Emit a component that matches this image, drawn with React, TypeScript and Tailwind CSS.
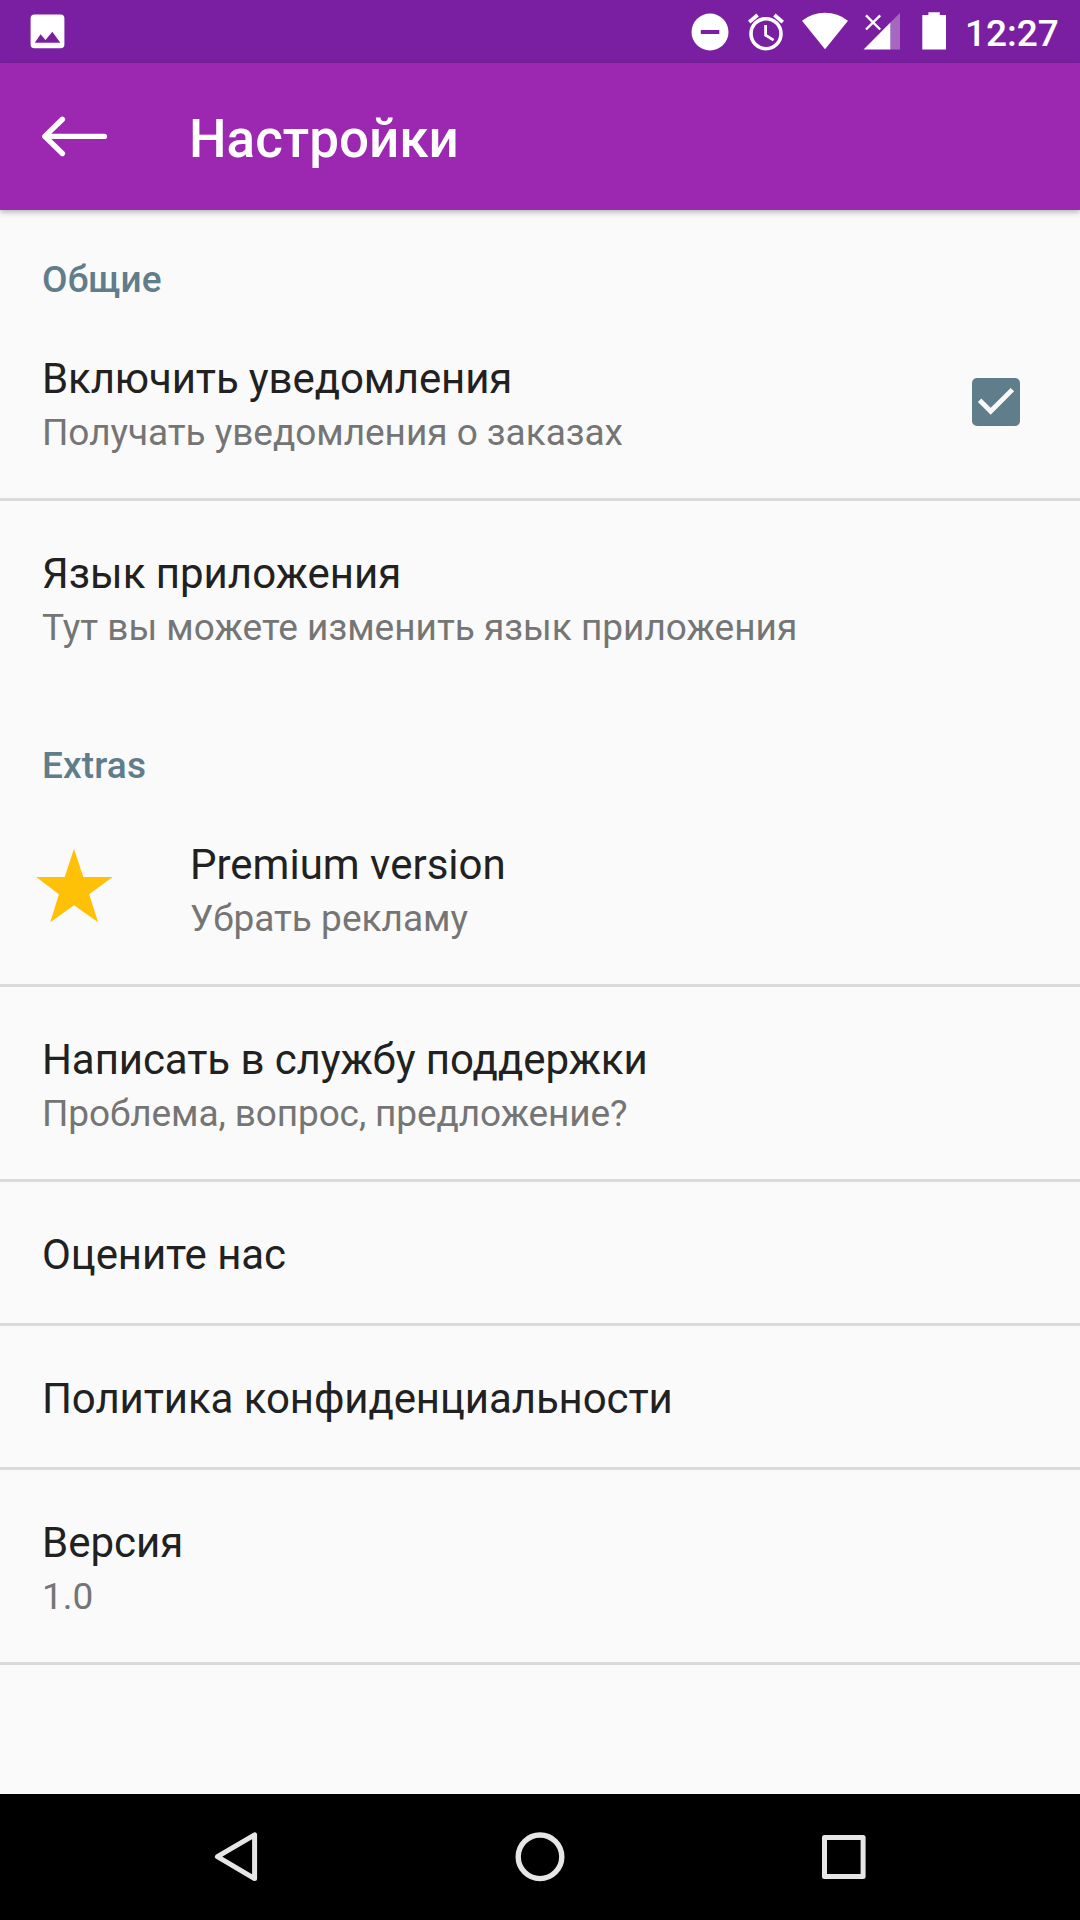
import type { ReactNode } from "react";

type RowProps = {
  title: string;
  sub?: string;
  icon?: ReactNode;
  action?: ReactNode;
  divider?: boolean;
  titleClass?: string;
  subClass?: string;
};

function Row({ title, sub, icon, action, divider = true, titleClass = "", subClass = "" }: RowProps) {
  return (
    <div
      className={`flex shrink-0 items-start border-b-3 ${sub ? "h-[195px]" : "h-36"} ${
        divider ? "border-[#dadada]" : "border-transparent"
      }`}
    >
      {icon && <div className="-mr-[42px] w-[190px] shrink-0 pt-14 pl-9">{icon}</div>}
      <div className="grow pt-12 pl-[42px] whitespace-nowrap">
        <div className={`h-[57px] text-[42px] leading-[49px] text-[#212121] ${titleClass}`}>{title}</div>
        {sub && <div className={`text-[37px] leading-[43px] text-[#757575] ${subClass}`}>{sub}</div>}
      </div>
      {action && <div className="shrink-0 pt-[72px] pr-[60px]">{action}</div>}
    </div>
  );
}

function SectionTitle({ children }: { children: ReactNode }) {
  return (
    <h2 className="h-24 shrink-0 pt-12 pl-[42px] text-[37px] leading-[43px] font-medium tracking-[0.15px] text-[#607d8b]">
      {children}
    </h2>
  );
}

function StarIcon() {
  return (
    <svg className="h-[76px] w-[78px]" viewBox="36 848 78 76" fill="#ffc107">
      <path d="M74 848.7l9.3 28.3h29.3l-23.4 17.3 8.9 28L74 905.3l-23.7 17 8.6-28L36.2 877h28.5z" />
    </svg>
  );
}

function Checkbox() {
  return (
    <div className="size-12 rounded-[5px] bg-[#607d8b]" role="checkbox" aria-checked="true">
      <svg className="size-12" viewBox="0 0 48 48" fill="none" stroke="#fafafa" strokeWidth="4.8">
        <path d="M7.6 22.2L18.7 33.3 40.4 11.6" />
      </svg>
    </div>
  );
}

function StatusBar() {
  return (
    <div className="flex h-[63px] shrink-0 items-start bg-[#7b1fa2] pl-[30px] text-white">
      <svg className="h-[63px] w-9" viewBox="30 0 36 63" fill="#fff">
        <path
          fillRule="evenodd"
          d="M34.4 14.4h26.2a3.8 3.8 0 0 1 3.8 3.8v26.3a3.8 3.8 0 0 1-3.8 3.8H34.4a3.8 3.8 0 0 1-3.8-3.8V18.2a3.8 3.8 0 0 1 3.8-3.8zM34.8 42.7h25.5l-8-11-6.8 8.2-4.9-5.6z"
        />
      </svg>
      <div className="ml-auto flex">
        <svg className="h-[63px] w-10" viewBox="690 0 40 63">
          <circle cx="710" cy="32" r="18.5" fill="#fff" />
          <path d="M700.8 30h18.5v4h-18.5z" fill="#7b1fa2" />
        </svg>
        <svg className="ml-4 h-[63px] w-10" viewBox="746 0 40 63" fill="none" stroke="#fff">
          <circle cx="766" cy="33.7" r="15" strokeWidth="3.6" />
          <path d="M765.6 25v10.3l8 4.8" strokeWidth="2.8" />
          <path d="M749.2 22.1l8.4-7.1M782.8 22.1l-8.4-7.1" strokeWidth="3.8" />
        </svg>
        <svg className="ml-4 h-[63px] w-[46px]" viewBox="802 0 46 63" fill="#fff">
          <path d="M802 20.7a37 37 0 0 1 46 0L825 49.2z" />
        </svg>
        <svg className="ml-3.5 h-[63px] w-[38px]" viewBox="862 0 38 63">
          <path d="M900 13v36.4h-9.6V22.6z" fill="#fff" opacity=".32" />
          <path d="M890.4 22.6v26.8h-26.8z" fill="#fff" />
          <path d="M866 15.3l14.2 14.2M880.2 15.3L866 29.5" stroke="#fff" strokeWidth="2.4" />
        </svg>
        <svg className="ml-[22px] h-[63px] w-6" viewBox="922 0 24 63" fill="#fff">
          <path d="M928.4 12.3h11.4V15h6.2v34.6h-23.7V15h6.1z" />
        </svg>
        <span className="ml-[19px] w-[115px] pt-3 text-[37px] leading-[43px] font-medium">12:27</span>
      </div>
    </div>
  );
}

function AppBar() {
  return (
    <header className="z-10 flex h-[147px] shrink-0 items-start bg-[#9c27b0] shadow-[0_2px_6px_rgba(0,0,0,0.3)]">
      <svg
        className="ml-10 h-[147px] w-[70px]"
        viewBox="40 63 70 147"
        fill="none"
        stroke="#fff"
        strokeWidth="5.4"
        strokeLinecap="round"
        strokeLinejoin="round"
      >
        <path d="M104.4 136.4H45M62.4 119.3L44.8 136.4l17.6 17.1" />
      </svg>
      <h1 className="ml-[79px] pt-[45px] text-[53px] leading-[62px] font-medium text-white">Настройки</h1>
    </header>
  );
}

function NavBar() {
  return (
    <nav className="flex h-[126px] shrink-0 items-center justify-between bg-black px-[212px]">
      <svg className="size-[50px]" viewBox="212 1832 50 50" fill="none" stroke="#e6e6e6" strokeWidth="5" strokeLinejoin="round">
        <path d="M254.6 1834.8v43.8l-37.2-21.9z" />
      </svg>
      <svg className="size-[50px]" viewBox="515 1832 50 50" fill="none" stroke="#e6e6e6" strokeWidth="5.4">
        <circle cx="540" cy="1856.8" r="21.8" />
      </svg>
      <svg className="size-[50px]" viewBox="818 1832 50 50" fill="none" stroke="#e6e6e6" strokeWidth="5" strokeLinejoin="round">
        <path d="M824.5 1837.5h38.6v39h-38.6z" />
      </svg>
    </nav>
  );
}

export default function App() {
  return (
    <div className="flex h-[1920px] w-[1080px] flex-col overflow-hidden bg-[#fafafa] font-['Roboto',sans-serif]">
      <StatusBar />
      <AppBar />
      <main className="flex grow flex-col">
        <SectionTitle>Общие</SectionTitle>
        <Row
          title="Включить уведомления"
          sub="Получать уведомления о заказах"
          action={<Checkbox />}
          titleClass="tracking-[-0.12px]"
          subClass="tracking-[-0.04px]"
        />
        <Row title="Язык приложения" sub="Тут вы можете изменить язык приложения" divider={false} />
        <SectionTitle>Extras</SectionTitle>
        <Row title="Premium version" sub="Убрать рекламу" icon={<StarIcon />} />
        <Row
          title="Написать в службу поддержки"
          sub="Проблема, вопрос, предложение?"
          titleClass="tracking-[-0.09px]"
          subClass="tracking-[-0.11px]"
        />
        <Row title="Оцените нас" titleClass="tracking-[-0.08px]" />
        <Row title="Политика конфиденциальности" titleClass="tracking-[-0.09px]" />
        <Row title="Версия" sub="1.0" />
      </main>
      <NavBar />
    </div>
  );
}
